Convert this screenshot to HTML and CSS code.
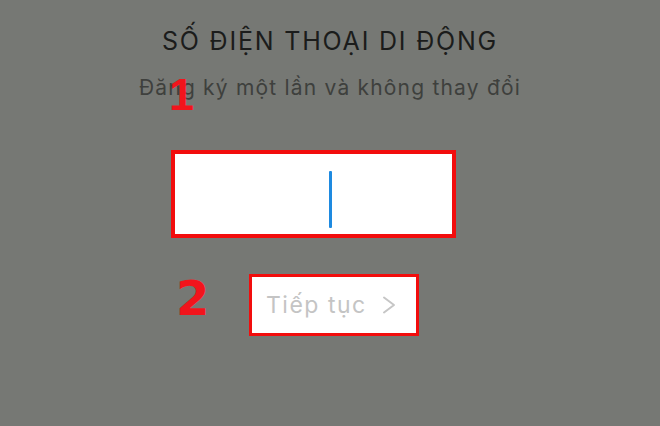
FILE: index.html
```html
<!DOCTYPE html>
<html lang="vi">
<head>
<meta charset="utf-8">
<link rel="stylesheet" href="styles.css">
</head>
<body>
<div class="screen">
  <h1 class="title">SỐ ĐIỆN THOẠI DI ĐỘNG</h1>
  <p class="subtitle">Đăng ký một lần và không thay đổi</p>
  <div class="input-row">
    <div class="phone-input"><span class="caret"></span></div>
  </div>
  <div class="button-row">
    <div class="next-btn">
      <span class="next-label">Tiếp tục</span>
      <svg class="chevron" width="14" height="18" viewBox="0 0 14 18"><polyline points="2,1.5 12,9 2,16.5" fill="none" stroke="#c6c6c6" stroke-width="2" stroke-linecap="round" stroke-linejoin="round"/></svg>
    </div>
  </div>
  <span class="mark mark-1">1</span>
  <span class="mark mark-2">2</span>
</div>
</body>
</html>
```
FILE: styles.css
```css
html, body {
  margin: 0;
  padding: 0;
}
body {
  background: #767874;
  width: 660px;
  height: 426px;
  overflow: hidden;
  font-family: Inter, "Liberation Sans", Arial, sans-serif;
}
.screen {
  position: relative;
  width: 660px;
  height: 426px;
  display: flex;
  flex-direction: column;
}
.title {
  margin: 27px 0 0 0;
  text-align: center;
  font-size: 25px;
  line-height: 28px;
  font-weight: normal;
  color: #1b1c1b;
  letter-spacing: 1.8px;
}
.subtitle {
  margin: 20px 0 0 0;
  text-align: center;
  font-size: 21px;
  line-height: 26px;
  color: #3e403d;
  letter-spacing: 1.2px;
}
.input-row {
  margin-top: 49px;
  padding-left: 171px;
}
.phone-input {
  box-sizing: border-box;
  width: 285px;
  height: 88px;
  border: 4px solid #f20d0d;
  background: #ffffff;
  position: relative;
}
.caret {
  position: absolute;
  left: 154px;
  top: 17px;
  width: 3px;
  height: 57px;
  background: #1e8ae0;
  border-radius: 1px;
}
.button-row {
  margin-top: 36px;
  padding-left: 249px;
}
.next-btn {
  box-sizing: border-box;
  width: 170px;
  height: 62px;
  border: 3px solid #f20d0d;
  background: #ffffff;
  display: flex;
  align-items: center;
  padding-left: 14px;
}
.next-label {
  font-size: 23px;
  color: #c4c4c4;
  letter-spacing: 1.5px;
}
.chevron {
  margin-left: 15px;
}
.mark {
  position: absolute;
  color: #f2141c;
  font-weight: bold;
  line-height: 1;
}
.mark-1 {
  font-family: "Liberation Sans", Arial, sans-serif;
  font-size: 45px;
  left: 169px;
  top: 72px;
}
.mark-2 {
  font-family: "DejaVu Sans", sans-serif;
  font-size: 48px;
  left: 176px;
  top: 274px;
}
```
